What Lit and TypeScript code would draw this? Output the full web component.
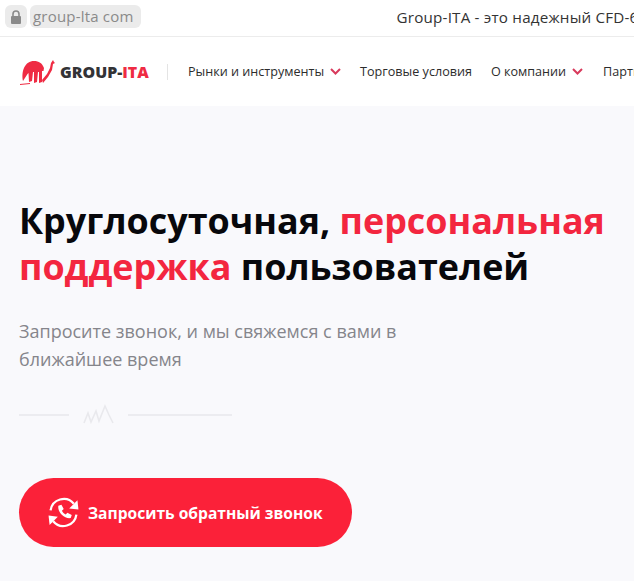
import { LitElement, html, css } from "lit";
import { customElement } from "lit/decorators.js";

@customElement("app-root")
export class AppRoot extends LitElement {
  static styles = css`
    :host {
      display: block;
      width: 634px;
      height: 581px;
      overflow: hidden;
      background: #f9f9fc;
      font-family: "Open Sans", "Noto Sans", sans-serif;
    }
    .bar {
      background: #fff;
      border-bottom: 1px solid #ececec;
      display: flex;
      align-items: center;
      padding: 0 0 3px 5px;
      height: 33px;
      white-space: nowrap;
      overflow: hidden;
    }
    .lock {
      width: 22px;
      height: 23px;
      background: #ebebeb;
      border-radius: 6px;
      display: flex;
      align-items: center;
      justify-content: center;
      flex: none;
    }
    .url {
      margin-left: 3px;
      height: 23px;
      line-height: 23px;
      padding: 0 7px 0 3px;
      background: #ebebeb;
      border-radius: 6px;
      color: #8a8a8a;
      font-size: 15px;
      letter-spacing: 0.2px;
      flex: none;
    }
    .title {
      margin-left: 256px;
      font-size: 15.2px;
      color: #333;
      letter-spacing: 0.2px;
      flex: none;
    }
    .nav {
      height: 69px;
      background: #fff;
      display: flex;
      align-items: center;
      padding-left: 20px;
      white-space: nowrap;
      font-size: 12.6px;
      color: #2c2c2c;
      overflow: hidden;
    }
    .logo {
      display: flex;
      align-items: center;
      flex: none;
      width: 147px;
    }
    .brand {
      margin-left: 5px;
      font-size: 15.9px;
      font-weight: 800;
      color: #333336;
    }
    .brand b { color: #ef2b43; font-weight: 800; }
    .sep { width: 1px; height: 16px; background: #e4e4e4; flex: none; }
    .item { display: flex; align-items: center; flex: none; }
    .m1 { margin-left: 20px; }
    .m2 { margin-left: 19px; }
    .m3 { margin-left: 19px; }
    .m4 { margin-left: 20px; }
    .chev { margin-left: 6px; }
    .hero { padding: 92px 0 0 19px; }
    h1 {
      margin: 0;
      font-size: 35.9px;
      line-height: 46px;
      font-weight: 700;
      color: #08080c;
      white-space: nowrap;
    }
    h1 span { color: #f3263f; }
    .sub {
      margin: 27px 0 0;
      font-size: 18px;
      line-height: 28px;
      color: #85858b;
    }
    .divider {
      margin-top: 30px;
      display: flex;
      align-items: center;
      height: 22px;
    }
    .line { height: 2px; background: #ececf0; }
    .l1 { width: 50px; margin-top: 2px; }
    .l2 { width: 104px; margin-left: 12px; margin-top: 2px; }
    .wave { margin-left: 14px; flex: none; }
    .btn {
      margin-top: 53px;
      width: 333px;
      height: 69px;
      border-radius: 35px;
      background: #fb2139;
      color: #fff;
      display: flex;
      align-items: center;
      padding-left: 28px;
      box-sizing: border-box;
      font-size: 15.6px;
      font-weight: 700;
    }
    .btn span { margin-left: 8px; }
  `;

  private chevron() {
    return html`<svg class="chev" width="11" height="7" viewBox="0 0 11 7">
      <path d="M1 1l4.5 4.5L10 1" fill="none" stroke="#d83a5c" stroke-width="2" />
    </svg>`;
  }

  render() {
    return html`
      <div class="bar">
        <div class="lock">
          <svg width="12" height="14" viewBox="0 0 12 14">
            <path d="M3 6V4a3 3 0 016 0v2" fill="none" stroke="#8a8a8a" stroke-width="1.6" />
            <rect x="1" y="6" width="10" height="8" rx="1" fill="#8a8a8a" />
          </svg>
        </div>
        <div class="url">group-lta com</div>
        <div class="title">Group-ITA - это надежный CFD-брокер</div>
      </div>
      <div class="nav">
        <div class="logo">
          <svg width="35" height="26" viewBox="0 0 35 26">
            <path d="M0 25.5l10-1" stroke="#ef2b43" stroke-width="1" />
            <path
              d="M3 22C1 12 5 2 14 2c5 0 8 2 10 7l-.5 3-1.5 0 0 11-3 1V13h-1l-1 10-3 1V13h-1l-1 9-3 1-.5-9-1 1z"
              fill="#ef2b43"
            />
            <path d="M22 21l5-6 3-6 1-5 2-3 1 2 1 1-2 1-1 6-4 7-5 6z" fill="#ef2b43" />
          </svg>
          <div class="brand">GROUP-<b>ITA</b></div>
        </div>
        <div class="sep"></div>
        <div class="item m1">Рынки и инструменты${this.chevron()}</div>
        <div class="item m2">Торговые условия</div>
        <div class="item m3">О компании${this.chevron()}</div>
        <div class="item m4">Партнеры</div>
      </div>
      <div class="hero">
        <h1>Круглосуточная, <span>персональная</span><br /><span>поддержка</span> пользователей</h1>
        <p class="sub">Запросите звонок, и мы свяжемся с вами в<br />ближайшее время</p>
        <div class="divider">
          <div class="line l1"></div>
          <svg class="wave" width="33" height="22" viewBox="0 0 33 22">
            <path d="M1 20l4-10 3 9 5-11 3 10 6-15 4 9 4 8" fill="none" stroke="#e9e9ed" stroke-width="1.6" />
          </svg>
          <div class="line l2"></div>
        </div>
        <div class="btn">
          <svg width="33" height="33" viewBox="0 0 32 32" fill="none">
            <path d="M3.5 14A12.8 12.8 0 0126 7.5" stroke="#fff" stroke-width="2.2" />
            <path d="M28.5 18A12.8 12.8 0 016 24.5" stroke="#fff" stroke-width="2.2" />
            <path d="M29.5 4l1 9-9-1z" fill="#fff" />
            <path d="M2.5 28l-1-9 9 1z" fill="#fff" />
            <path
              d="M11 9.5l3-1 2.2 4.2-1.7 1.6c.8 1.7 2 2.9 3.6 3.6l1.7-1.7 4.2 2.2-1 3c-6.5 1-13-6-12-12z"
              fill="#fff"
            />
          </svg>
          <span>Запросить обратный звонок</span>
        </div>
      </div>
    `;
  }
}
